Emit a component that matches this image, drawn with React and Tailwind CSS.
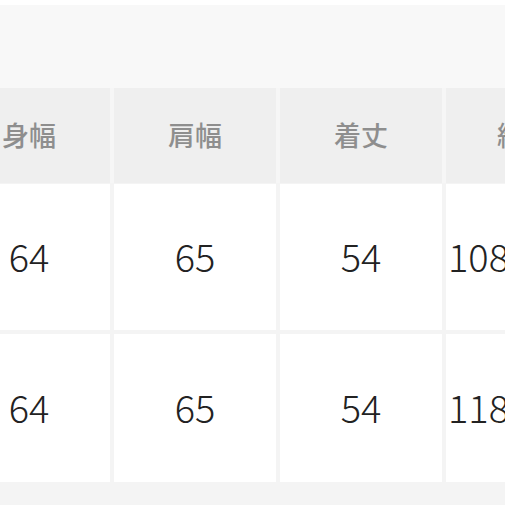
const font = { fontFamily: '"Noto Sans CJK JP", "Noto Sans", sans-serif' };

const headers = ['身幅', '肩幅', '着丈', '総丈'];
const rows = [
  ['64', '65', '54', '108'],
  ['64', '65', '54', '118'],
];

export default function App() {
  return (
    <div className="w-[505px] h-[505px] overflow-hidden bg-white" style={font}>
      <div className="h-[5px] bg-white" />
      <div className="h-[83px] bg-[#f8f8f8]" />
      <div className="bg-[#f4f4f4] h-[417px]">
        <div className="ml-[-52px] w-[660px] flex flex-col gap-[1px]">
          <div className="grid grid-cols-[162px_162px_162px_162px] gap-x-[4px] bg-[#f6f6f6]">
            {headers.map((h, i) => (
              <div
                key={h}
                className={`h-[95px] bg-[#efefef] flex items-center text-[27px] font-medium text-[#8e8e8e] ${i === 3 ? 'justify-start pl-[51px]' : 'justify-center'}`}
              >
                {h}
              </div>
            ))}
          </div>
          {rows.map((r, ri) => (
            <div
              key={ri}
              className={`grid grid-cols-[162px_162px_162px_162px] gap-x-[4px] ${ri === 0 ? 'h-[146px]' : 'h-[148px] mt-[3px]'}`}
            >
              {r.map((v, i) => (
                <div
                  key={i}
                  className={`bg-white flex items-center text-[38px] font-light text-[#222] pb-[3px] ${i === 3 ? 'justify-start pl-[2px]' : 'justify-center'}`}
                >
                  {v}
                </div>
              ))}
            </div>
          ))}
        </div>
      </div>
    </div>
  );
}
